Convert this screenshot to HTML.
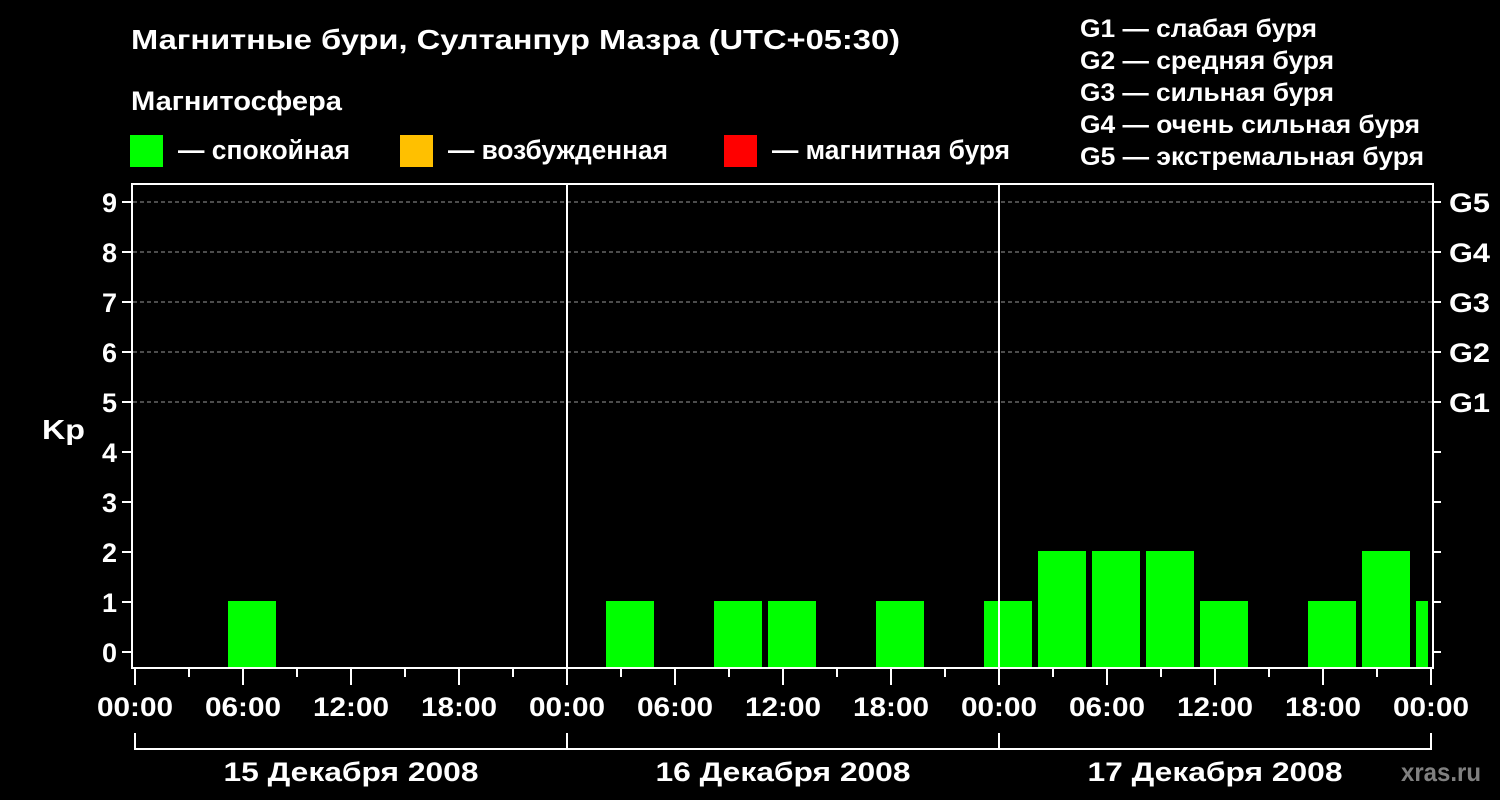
<!DOCTYPE html><html><head><meta charset="utf-8"><style>body{margin:0;background:#000}svg{display:block}text{font-family:"Liberation Sans",sans-serif;font-weight:bold;fill:#fff}</style></head><body>
<svg width="1500" height="800" xmlns="http://www.w3.org/2000/svg">
<rect width="1500" height="800" fill="#000"/>
<g>
<text x="131" y="49" font-size="28" textLength="769" lengthAdjust="spacingAndGlyphs">Магнитные бури, Султанпур Мазра (UTC+05:30)</text>
<text x="131" y="110" font-size="27" textLength="211" lengthAdjust="spacingAndGlyphs">Магнитосфера</text>
<rect x="130" y="135" width="33" height="32" fill="#00ff00"/><text x="178" y="159" font-size="27" textLength="172" lengthAdjust="spacingAndGlyphs">— спокойная</text>
<rect x="400" y="135" width="33" height="32" fill="#ffc000"/><text x="448" y="159" font-size="27" textLength="220" lengthAdjust="spacingAndGlyphs">— возбужденная</text>
<rect x="724" y="135" width="33" height="32" fill="#ff0000"/><text x="772" y="159" font-size="27" textLength="238" lengthAdjust="spacingAndGlyphs">— магнитная буря</text>
<g font-size="25"><text x="1080" y="37" textLength="237" lengthAdjust="spacingAndGlyphs">G1 — слабая буря</text><text x="1080" y="69" textLength="254" lengthAdjust="spacingAndGlyphs">G2 — средняя буря</text><text x="1080" y="101" textLength="254" lengthAdjust="spacingAndGlyphs">G3 — сильная буря</text><text x="1080" y="133" textLength="340" lengthAdjust="spacingAndGlyphs">G4 — очень сильная буря</text><text x="1080" y="165" textLength="344" lengthAdjust="spacingAndGlyphs">G5 — экстремальная буря</text></g>
</g>
<g stroke="#999" stroke-dasharray="4,3" stroke-width="1"><line x1="133" y1="202" x2="1432" y2="202"/><line x1="133" y1="252" x2="1432" y2="252"/><line x1="133" y1="302" x2="1432" y2="302"/><line x1="133" y1="352" x2="1432" y2="352"/><line x1="133" y1="402" x2="1432" y2="402"/></g>
<g fill="#00ff00">
<rect x="228" y="601" width="48" height="67"/>
<rect x="606" y="601" width="48" height="67"/>
<rect x="714" y="601" width="48" height="67"/>
<rect x="768" y="601" width="48" height="67"/>
<rect x="876" y="601" width="48" height="67"/>
<rect x="984" y="601" width="48" height="67"/>
<rect x="1038" y="551" width="48" height="117"/>
<rect x="1092" y="551" width="48" height="117"/>
<rect x="1146" y="551" width="48" height="117"/>
<rect x="1200" y="601" width="48" height="67"/>
<rect x="1308" y="601" width="48" height="67"/>
<rect x="1362" y="551" width="48" height="117"/>
<rect x="1416" y="601" width="12" height="67"/>
</g>
<g stroke="#fff" stroke-width="2" fill="none">
<rect x="132" y="184" width="1301" height="484"/>
<line x1="567" y1="184" x2="567" y2="668"/><line x1="999" y1="184" x2="999" y2="668"/>
<path d="M122 202h10M122 252h10M122 302h10M122 352h10M122 402h10M122 452h10M122 502h10M122 552h10M122 602h10M122 652h10"/>
<path d="M1433 202h8M1433 252h8M1433 302h8M1433 352h8M1433 402h8M1433 452h8M1433 502h8M1433 552h8M1433 602h8M1433 652h8"/>
<path d="M135 668v17M189 668v9M243 668v17M297 668v9M351 668v17M405 668v9M459 668v17M513 668v9M567 668v17M621 668v9M675 668v17M729 668v9M783 668v17M837 668v9M891 668v17M945 668v9M999 668v17M1053 668v9M1107 668v17M1161 668v9M1215 668v17M1269 668v9M1323 668v17M1377 668v9M1431 668v17"/>
<path d="M135 733v16h1296v-16M567 733v16M999 733v16"/>
</g>
<g font-size="27" text-anchor="end"><text x="117" y="212">9</text><text x="117" y="262">8</text><text x="117" y="312">7</text><text x="117" y="362">6</text><text x="117" y="412">5</text><text x="117" y="462">4</text><text x="117" y="512">3</text><text x="117" y="562">2</text><text x="117" y="612">1</text><text x="117" y="662">0</text></g>
<text x="42" y="439" font-size="28" textLength="43" lengthAdjust="spacingAndGlyphs">Kp</text>
<g font-size="27"><text x="1449" y="212" textLength="41" lengthAdjust="spacingAndGlyphs">G5</text><text x="1449" y="262" textLength="41" lengthAdjust="spacingAndGlyphs">G4</text><text x="1449" y="312" textLength="41" lengthAdjust="spacingAndGlyphs">G3</text><text x="1449" y="362" textLength="41" lengthAdjust="spacingAndGlyphs">G2</text><text x="1449" y="412" textLength="41" lengthAdjust="spacingAndGlyphs">G1</text></g>
<g font-size="27" text-anchor="middle"><text x="135" y="716" textLength="76" lengthAdjust="spacingAndGlyphs">00:00</text><text x="243" y="716" textLength="76" lengthAdjust="spacingAndGlyphs">06:00</text><text x="351" y="716" textLength="76" lengthAdjust="spacingAndGlyphs">12:00</text><text x="459" y="716" textLength="76" lengthAdjust="spacingAndGlyphs">18:00</text><text x="567" y="716" textLength="76" lengthAdjust="spacingAndGlyphs">00:00</text><text x="675" y="716" textLength="76" lengthAdjust="spacingAndGlyphs">06:00</text><text x="783" y="716" textLength="76" lengthAdjust="spacingAndGlyphs">12:00</text><text x="891" y="716" textLength="76" lengthAdjust="spacingAndGlyphs">18:00</text><text x="999" y="716" textLength="76" lengthAdjust="spacingAndGlyphs">00:00</text><text x="1107" y="716" textLength="76" lengthAdjust="spacingAndGlyphs">06:00</text><text x="1215" y="716" textLength="76" lengthAdjust="spacingAndGlyphs">12:00</text><text x="1323" y="716" textLength="76" lengthAdjust="spacingAndGlyphs">18:00</text><text x="1431" y="716" textLength="76" lengthAdjust="spacingAndGlyphs">00:00</text>
<text x="351" y="781" textLength="255" lengthAdjust="spacingAndGlyphs">15 Декабря 2008</text><text x="783" y="781" textLength="255" lengthAdjust="spacingAndGlyphs">16 Декабря 2008</text><text x="1215" y="781" textLength="255" lengthAdjust="spacingAndGlyphs">17 Декабря 2008</text></g>
<text x="1401" y="781" font-size="26" textLength="80" lengthAdjust="spacingAndGlyphs" style="fill:#808080">xras.ru</text>
</svg></body></html>
